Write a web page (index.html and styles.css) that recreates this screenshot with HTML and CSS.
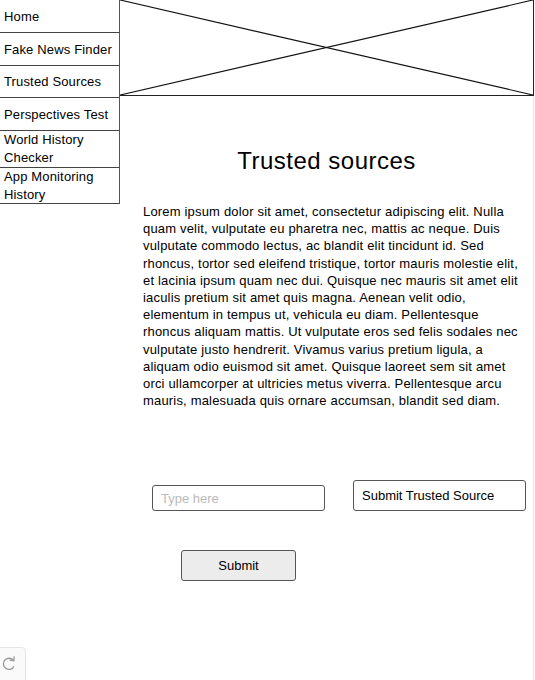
FILE: index.html
```html
<!DOCTYPE html>
<html lang="en">

<head>
    <meta charset="UTF-8" />
    <meta name="viewport" content="width=device-width, initial-scale=1.0" />
    <title>Trusted Sources</title>
    <link rel="stylesheet" href="styles.css">
</head>

<body>
    <div class="page">
        <nav class="side-nav">
            <a class="nav-item h33" href="#">Home</a>
            <a class="nav-item h33" href="#">Fake News Finder</a>
            <a class="nav-item h32" href="#">Trusted Sources</a>
            <a class="nav-item h33" href="#">Perspectives Test</a>
            <a class="nav-item two-line h37" href="#">World History Checker</a>
            <a class="nav-item two-line h36" href="#">App Monitoring History</a>
        </nav>

        <main class="main-col">
            <div class="banner">
                <svg viewBox="0 0 100 100" preserveAspectRatio="none">
                    <line x1="0" y1="0" x2="100" y2="100" vector-effect="non-scaling-stroke" />
                    <line x1="0" y1="100" x2="100" y2="0" vector-effect="non-scaling-stroke" />
                </svg>
            </div>

            <h1 class="page-title">Trusted sources</h1>

            <p class="intro">Lorem ipsum dolor sit amet, consectetur adipiscing elit. Nulla<br>
                quam velit, vulputate eu pharetra nec, mattis ac neque. Duis<br>
                vulputate commodo lectus, ac blandit elit tincidunt id. Sed<br>
                rhoncus, tortor sed eleifend tristique, tortor mauris molestie elit,<br>
                et lacinia ipsum quam nec dui. Quisque nec mauris sit amet elit<br>
                iaculis pretium sit amet quis magna. Aenean velit odio,<br>
                elementum in tempus ut, vehicula eu diam. Pellentesque<br>
                rhoncus aliquam mattis. Ut vulputate eros sed felis sodales nec<br>
                vulputate justo hendrerit. Vivamus varius pretium ligula, a<br>
                aliquam odio euismod sit amet. Quisque laoreet sem sit amet<br>
                orci ullamcorper at ultricies metus viverra. Pellentesque arcu<br>
                mauris, malesuada quis ornare accumsan, blandit sed diam.</p>

            <div class="source-row">
                <input type="text" class="source-input" placeholder="Type here" />
                <button class="source-btn">Submit Trusted Source</button>
            </div>

            <button class="submit-btn">Submit</button>
        </main>
    </div>

    <div class="redo-tab">
        <svg width="16" height="18" viewBox="0 0 16 18">
            <path d="M12.6 6.6 A5.6 5.6 0 1 0 13 12.4" />
            <path d="M13.2 2.4 L12.8 6.8 L8.6 6" />
        </svg>
    </div>
</body>

</html>
```

FILE: styles.css
```css
body {
    margin: 0;
    font-family: "Liberation Sans", Arial, sans-serif;
    color: #000;
    background: #fff;
}

.page {
    display: flex;
    align-items: flex-start;
}

.side-nav {
    width: 120px;
    flex-shrink: 0;
    display: flex;
    flex-direction: column;
}

.nav-item {
    box-sizing: border-box;
    display: flex;
    align-items: center;
    padding-left: 4px;
    border-bottom: 1px solid #444;
    border-right: 1px solid #555;
    color: #000;
    text-decoration: none;
    font-size: 13px;
    letter-spacing: 0.15px;
}

.two-line {
    line-height: 18px;
    padding-right: 20px;
}

.h32 { height: 32px; }
.h33 { height: 33px; }
.h36 { height: 36px; }
.h37 { height: 37px; }

.main-col {
    width: 414px;
    min-height: 680px;
    box-sizing: border-box;
    border-right: 1px solid #e2e2e2;
}

.banner {
    height: 96px;
    box-sizing: border-box;
    border-bottom: 1px solid #222;
    border-right: 1px solid #222;
    margin-right: -1px;
}

.banner svg {
    display: block;
    width: 100%;
    height: 100%;
}

.banner line {
    stroke: #111;
    stroke-width: 1.2;
}

.page-title {
    margin: 51px 0 0;
    font-size: 24px;
    font-weight: normal;
    line-height: 28px;
    letter-spacing: 0.5px;
    text-align: center;
}

.intro {
    margin: 28px 0 0 23px;
    width: 390px;
    font-size: 13px;
    line-height: 17.2px;
    letter-spacing: 0.18px;
}

.source-row {
    display: flex;
    align-items: flex-end;
    margin: 71px 0 0 32px;
    gap: 28px;
}

.source-input {
    box-sizing: border-box;
    width: 173px;
    height: 26px;
    padding: 0 8px;
    border: 1px solid #555;
    border-radius: 3px;
    font-family: inherit;
    font-size: 13px;
}

.source-input::placeholder {
    color: #bbb;
}

.source-btn {
    box-sizing: border-box;
    width: 173px;
    height: 31px;
    padding: 0 8px;
    text-align: left;
    background: #fff;
    border: 1px solid #555;
    border-radius: 3px;
    font-family: inherit;
    font-size: 13px;
    color: #000;
}

.submit-btn {
    display: block;
    box-sizing: border-box;
    width: 115px;
    height: 31px;
    margin: 39px 0 0 61px;
    background: #ececec;
    border: 1px solid #555;
    border-radius: 3px;
    font-family: inherit;
    font-size: 13px;
    color: #000;
}

.redo-tab {
    position: fixed;
    left: -4px;
    top: 647px;
    width: 30px;
    height: 40px;
    box-sizing: border-box;
    border: 1px solid #e6e6e6;
    border-radius: 4px;
    background: #fafafa;
    padding: 6px 0 0 4px;
}

.redo-tab svg {
    display: block;
}

.redo-tab path {
    fill: none;
    stroke: #999;
    stroke-width: 1.3;
}
```
